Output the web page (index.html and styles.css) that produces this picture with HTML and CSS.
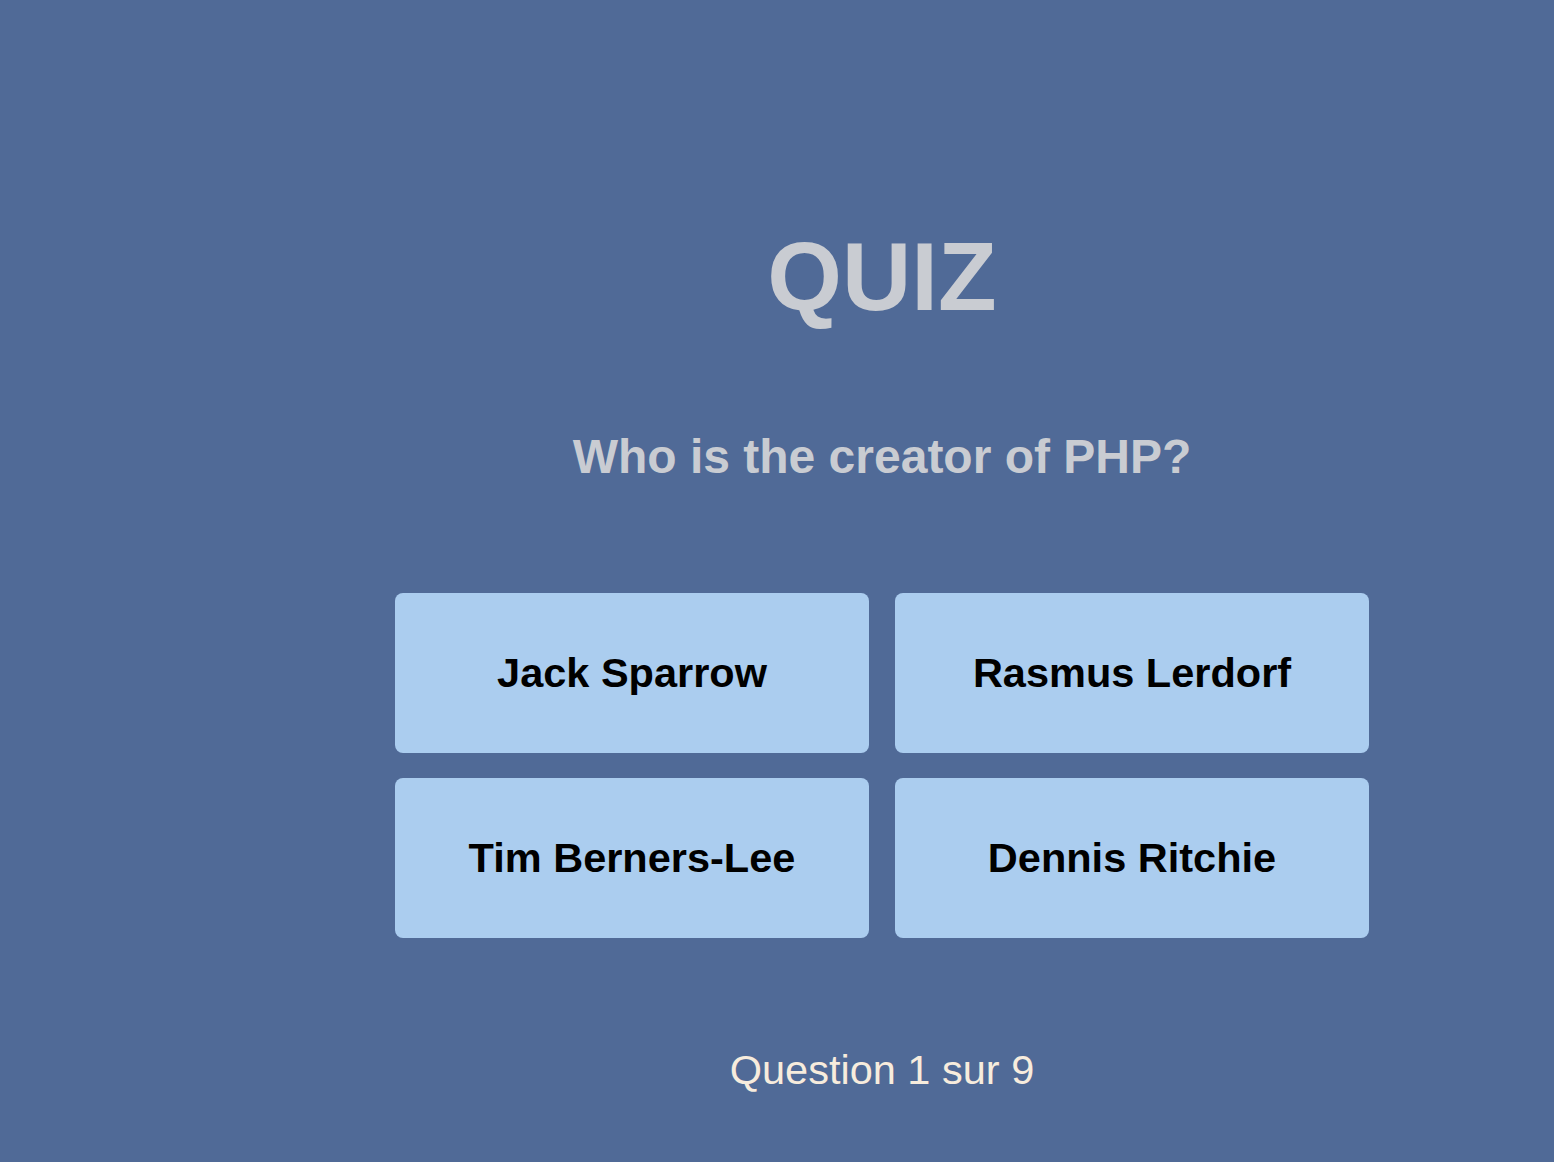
FILE: index.html
```html
<!DOCTYPE html>
<html lang="en">
<head>
<meta charset="utf-8">
<title>Quiz</title>
<link rel="stylesheet" href="styles.css">
</head>
<body>
<main class="quiz">
  <h1 class="quiz-title">QUIZ</h1>
  <h2 class="quiz-question">Who is the creator of PHP?</h2>
  <div class="answers">
    <button class="answer">Jack Sparrow</button>
    <button class="answer">Rasmus Lerdorf</button>
    <button class="answer">Tim Berners-Lee</button>
    <button class="answer">Dennis Ritchie</button>
  </div>
  <p class="progress">Question 1 sur 9</p>
</main>
</body>
</html>
```
FILE: styles.css
```css
html, body {
  margin: 0;
  padding: 0;
}
body {
  background: #506a97;
  font-family: "Liberation Sans", Arial, Helvetica, sans-serif;
  min-height: 1162px;
}
.quiz {
  width: 974px;
  margin-left: 395px;
  padding-top: 222px;
  display: flex;
  flex-direction: column;
}
.quiz-title {
  margin: 0;
  font-size: 96px;
  line-height: 110px;
  font-weight: bold;
  text-align: center;
  color: #c9ccd2;
}
.quiz-question {
  margin: 97px 0 0;
  font-size: 48px;
  line-height: 56px;
  font-weight: bold;
  text-align: center;
  color: #c9ccd2;
}
.answers {
  margin-top: 108px;
  display: grid;
  grid-template-columns: 474px 474px;
  grid-auto-rows: 160px;
  column-gap: 26px;
  row-gap: 25px;
}
.answer {
  border: none;
  border-radius: 8px;
  background: #abcdef;
  color: #000;
  font-family: "Liberation Sans", Arial, Helvetica, sans-serif;
  font-size: 41.5px;
  font-weight: bold;
  padding: 0;
  display: flex;
  align-items: center;
  justify-content: center;
}
.progress {
  margin: 109px 0 0;
  font-size: 41.5px;
  line-height: 46px;
  text-align: center;
  color: #f7ecdd;
}
```
